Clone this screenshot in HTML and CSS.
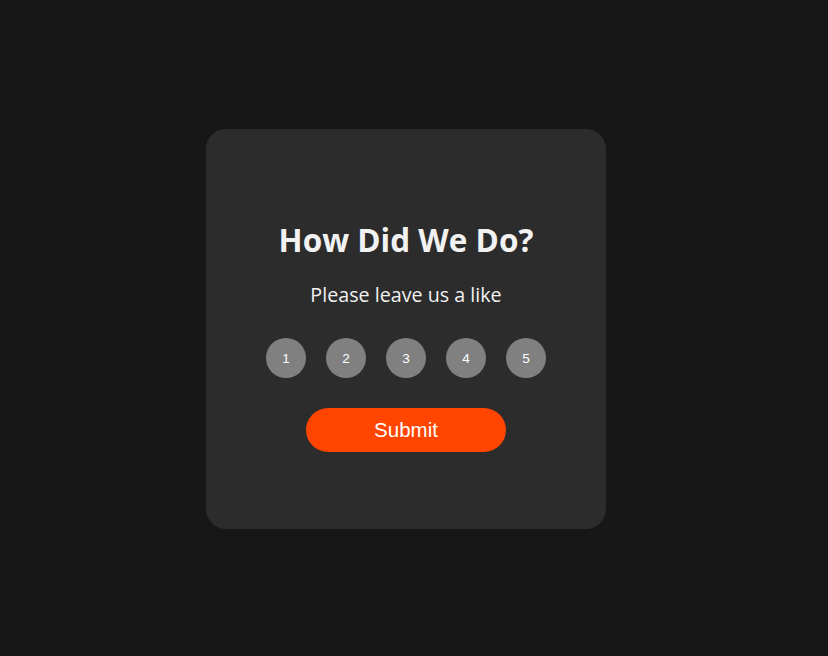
FILE: index.html
```html
<!DOCTYPE html>
<html lang="en">
<head>
<meta charset="utf-8">
<title>How Did We Do?</title>
<link rel="stylesheet" href="styles.css">
</head>
<body>
<main class="page">
  <section class="card">
    <h1 class="title">How Did We Do?</h1>
    <p class="subtitle">Please leave us a like</p>
    <div class="ratings">
      <button class="rate">1</button>
      <button class="rate">2</button>
      <button class="rate">3</button>
      <button class="rate">4</button>
      <button class="rate">5</button>
    </div>
    <button class="submit">Submit</button>
  </section>
</main>
</body>
</html>
```

FILE: styles.css
```css
html, body {
  margin: 0;
  padding: 0;
  background: #171717;
}
.page {
  height: 656px;
  box-sizing: border-box;
  padding: 2px 16px 0 0;
  display: flex;
  align-items: center;
  justify-content: center;
}
.card {
  width: 400px;
  height: 400px;
  box-sizing: border-box;
  padding-top: 91px;
  background: #2c2c2c;
  border-radius: 20px;
  display: flex;
  flex-direction: column;
  align-items: center;
}
.title {
  margin: 0;
  font-family: "Open Sans", "Noto Sans", sans-serif;
  font-weight: 700;
  font-size: 31.5px;
  line-height: 40px;
  color: #f2f2f2;
}
.subtitle {
  margin: 23px 0 0;
  font-family: "Open Sans", "Noto Sans", sans-serif;
  font-size: 19.7px;
  line-height: 24px;
  color: #f2f2f2;
}
.ratings {
  margin-top: 31px;
  display: flex;
  gap: 20px;
}
.rate {
  width: 40px;
  height: 40px;
  padding: 0;
  border: none;
  border-radius: 50%;
  background: #808080;
  color: #ffffff;
  font-family: "Liberation Sans", Arial, sans-serif;
  font-size: 13.5px;
  display: flex;
  align-items: center;
  justify-content: center;
}
.submit {
  margin-top: 30px;
  width: 200px;
  height: 44px;
  padding: 0;
  border: none;
  border-radius: 22px;
  background: #ff4500;
  color: #ffffff;
  font-family: "Liberation Sans", Arial, sans-serif;
  font-size: 20.5px;
}
```
